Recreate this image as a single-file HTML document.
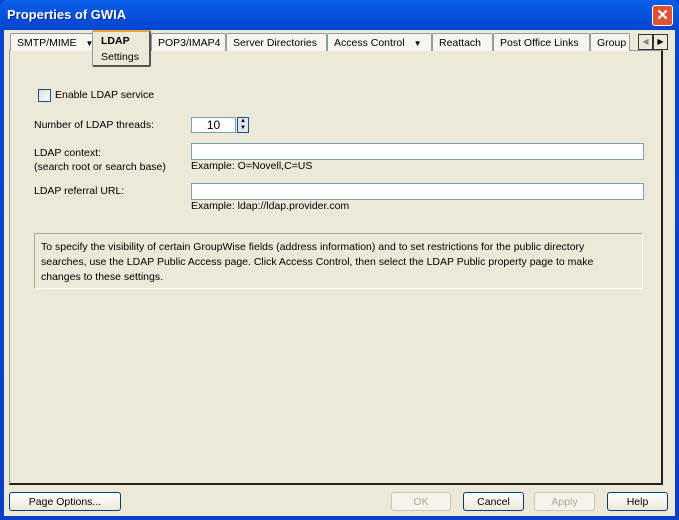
<!DOCTYPE html><html><head><style>
*{margin:0;padding:0;box-sizing:border-box}
body{width:679px;height:520px;overflow:hidden;background:#0842d8;font-family:"Liberation Sans",sans-serif;font-size:10.5px;color:#000;position:relative}
.a{position:absolute;white-space:nowrap}
.frame{left:0;top:0;width:679px;height:520px;background:linear-gradient(#0a5fe8,#0545d0 30px,#0a3fc8);border-radius:7px 7px 0 0}
.title{left:7px;top:7px;color:#fff;font-weight:bold;font-size:13px;text-shadow:1px 1px #0a2a8a}
.client{left:4px;top:30px;width:671px;height:486px;background:#ece9d8}
.close{left:652px;top:5px;width:21px;height:21px;background:#e0512e;border:1px solid #fff;border-radius:3px;color:#fff;font-weight:bold;font-size:15px;text-align:center;line-height:19px}
.tab{top:33px;height:18px;border:1px solid #919b9c;border-bottom:none;background:#f6f5f0;padding:3px 0 0 6px;overflow:hidden;border-radius:2px 2px 0 0}
.panel{left:9px;top:50px;width:654px;height:435px;border:1px solid #919b9c;border-right:2px solid #222;border-bottom:2px solid #222;background:#ece9d8}
.inp{background:#fff;border:1px solid #7f9db9}
.btn{top:492px;height:19px;border:1px solid #003c74;border-radius:3px;background:linear-gradient(#fff,#ece9d8);text-align:center;line-height:18px}
.dis{border-color:#c9c7ba;color:#aca899;background:#f5f4ea}
.arr{font-size:8px;margin-left:9px}
</style></head><body>
<div class="a frame"></div>
<div class="a title">Properties of GWIA</div>
<div class="a close">✕</div>
<div class="a client"></div>
<div class="a panel"></div>
<div class="a tab" style="left:10px;width:83px">SMTP/MIME<span class="arr">▼</span></div>
<div class="a tab" style="left:151px;width:75px">POP3/IMAP4</div>
<div class="a tab" style="left:226px;width:101px">Server Directories</div>
<div class="a tab" style="left:327px;width:105px">Access Control<span class="arr">▼</span></div>
<div class="a tab" style="left:432px;width:61px">Reattach</div>
<div class="a tab" style="left:493px;width:97px">Post Office Links</div>
<div class="a tab" style="left:590px;width:40px">Group</div>
<div class="a" style="left:92px;top:30px;width:59px;height:37px;background:#ece9d8;border:1px solid #919b9c;border-right:2px solid #555;border-bottom:2px solid #555;border-top:2px solid #e8a33d;border-radius:2px"></div>
<div class="a" style="left:101px;top:35px;font-weight:bold">LDAP</div>
<div class="a" style="left:101px;top:51px">Settings</div>
<div class="a" style="left:638px;top:34px;width:15px;height:16px;border:1px solid #333;background:#ece9d8;color:#888;font-size:8px;text-align:center;line-height:14px">◀</div>
<div class="a" style="left:653px;top:34px;width:15px;height:16px;border:1px solid #333;background:#ece9d8;font-size:8px;text-align:center;line-height:14px">▶</div>
<div class="a" style="left:38px;top:89px;width:13px;height:13px;border:1px solid #1c5180;background:linear-gradient(135deg,#dcdcd7,#fff)"></div>
<div class="a" style="left:55px;top:89px">Enable LDAP service</div>
<div class="a" style="left:34px;top:119px">Number of LDAP threads:</div>
<div class="a inp" style="left:191px;top:117px;width:45px;height:16px;text-align:center;font-size:12px;line-height:14px">10</div>
<div class="a" style="left:237px;top:117px;width:12px;height:16px;border:1px solid #1c5180;background:#dfe6f5;font-size:6px;line-height:7px;text-align:center">▲<br>▼</div>
<div class="a" style="left:34px;top:146px;line-height:14px">LDAP context:<br>(search root or search base)</div>
<div class="a inp" style="left:191px;top:143px;width:453px;height:17px"></div>
<div class="a" style="left:191px;top:160px">Example: O=Novell,C=US</div>
<div class="a" style="left:34px;top:185px">LDAP referral URL:</div>
<div class="a inp" style="left:191px;top:183px;width:453px;height:17px"></div>
<div class="a" style="left:191px;top:200px">Example: ldap://ldap.provider.com</div>
<div class="a" style="left:34px;top:233px;width:609px;height:56px;border:1px solid #aca899;border-right-color:#fff;border-bottom-color:#fff;padding:6px 6px;line-height:15px;font-size:10.5px;overflow:hidden">To specify the visibility of certain GroupWise fields (address information) and to set restrictions for the public directory<br>searches, use the LDAP Public Access page. Click Access Control, then select the LDAP Public property page to make<br>changes to these settings.</div>
<div class="a btn" style="left:9px;width:112px">Page Options...</div>
<div class="a btn dis" style="left:391px;width:60px">OK</div>
<div class="a btn" style="left:463px;width:61px">Cancel</div>
<div class="a btn dis" style="left:534px;width:61px">Apply</div>
<div class="a btn" style="left:607px;width:61px">Help</div>
</body></html>
